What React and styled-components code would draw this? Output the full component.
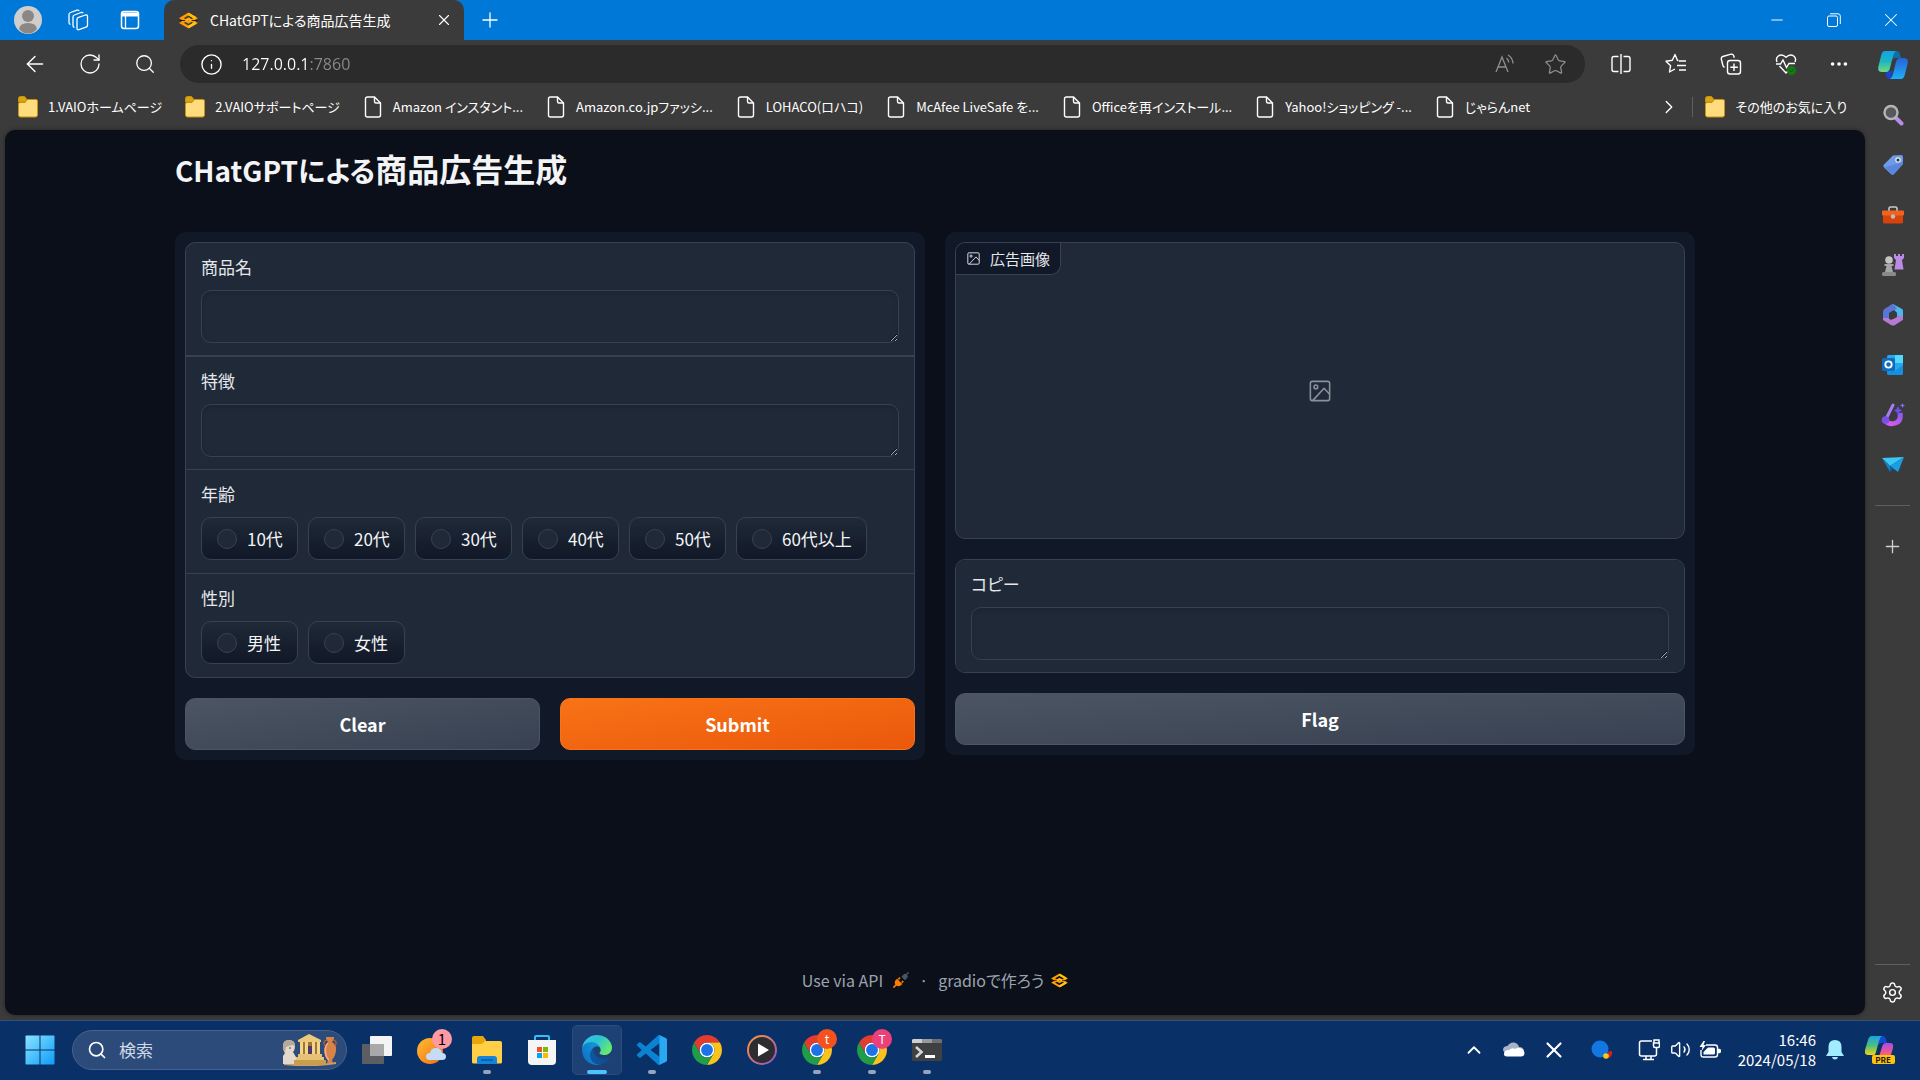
import React from "react";
import styled, { createGlobalStyle } from "styled-components";
import {
  ArrowLeft,
  RotateCw,
  Search,
  Info,
  X,
  Plus,
  Minus,
  Star,
  ChevronRight,
  ChevronUp,
  Ellipsis,
  Settings,
  Volume2,
} from "lucide-react";

const GlobalStyle = createGlobalStyle`
  * {
    box-sizing: border-box;
  }
  body {
    margin: 0;
    font-family: "Noto Sans CJK JP", sans-serif;
    font-feature-settings: "palt";
    color: #ffffff;
    background: #3b3b3b;
  }
  button,
  input,
  textarea {
    font-family: inherit;
    font-feature-settings: inherit;
    color: inherit;
    margin: 0;
  }
  svg {
    display: block;
    flex-shrink: 0;
  }
`;

/* ---------- browser frame ---------- */

const Desktop = styled.div`
  display: flex;
  flex-direction: column;
  min-height: 100vh;
  background: #3b3b3b;
`;
const TitleBar = styled.header`
  display: flex;
  align-items: center;
  height: 40px;
  background: #0078d7;
`;
const IconButton = styled.button`
  display: flex;
  align-items: center;
  justify-content: center;
  width: ${(p) => p.$w || 55}px;
  height: ${(p) => p.$h || 40}px;
  padding: 0;
  border: 0;
  flex-shrink: 0;
  background: transparent;
  color: ${(p) => p.$color || "#ffffff"};
`;
const Tab = styled.div`
  display: flex;
  align-items: center;
  gap: 12px;
  width: 300px;
  height: 40px;
  margin-left: 6px;
  padding-left: 15px;
  border-radius: 10px 10px 0 0;
  background: #3b3b3b;
  font-size: 14px;
  line-height: 20px;
  white-space: nowrap;
`;
const TabTitle = styled.span`
  flex: 1;
`;
const WindowControls = styled.div`
  display: flex;
  margin-left: auto;
`;
const Body = styled.div`
  display: flex;
  flex: 1;
`;
const Main = styled.div`
  display: flex;
  flex-direction: column;
  flex: 1;
  min-width: 0;
`;
const Toolbar = styled.div`
  display: flex;
  align-items: center;
  height: 48px;
  padding-left: 7px;
`;
const AddressBar = styled.div`
  display: flex;
  align-items: center;
  flex: 1;
  height: 38px;
  margin: 0 8px;
  padding: 0 5px 0 20px;
  border-radius: 19px;
  background: #2b2b2b;
`;
const AddressInput = styled.input`
  flex: 1;
  min-width: 0;
  height: 24px;
  margin-left: 19px;
  padding: 0;
  border: 0;
  outline: 0;
  font-family: "Open Sans", sans-serif;
  font-size: 16px;
  line-height: 24px;
  background: linear-gradient(90deg, #ffffff 66px, #8b8b8b 66px);
  -webkit-background-clip: text;
  background-clip: text;
  -webkit-text-fill-color: transparent;
`;
const Bookmarks = styled.nav`
  display: flex;
  align-items: center;
  gap: 23px;
  height: 42px;
  padding: 0 18px;
  padding-bottom: 4px;
`;
const BookmarkLink = styled.a`
  display: flex;
  align-items: center;
  gap: 10px;
  color: #ffffff;
  font-size: 13px;
  line-height: 20px;
  text-decoration: none;
  white-space: nowrap;
`;
const BookmarksEnd = styled.div`
  display: flex;
  align-items: center;
  gap: 12px;
  margin-left: auto;
`;
const VerticalRule = styled.span`
  width: 1px;
  height: 20px;
  background: #5f5f5f;
`;
const Sidebar = styled.aside`
  display: flex;
  flex-direction: column;
  align-items: center;
  width: 55px;
  padding-bottom: 3px;
`;
const SideRule = styled.span`
  width: 35px;
  height: 1px;
  margin: ${(p) => (p.$bottom ? "auto 0 2px" : "15px 0")};
  background: #5f5f5f;
`;

/* ---------- page ---------- */

const Page = styled.main`
  display: flex;
  flex-direction: column;
  flex: 1;
  margin: 0 0 5px 5px;
  padding: 18px 40px 22px;
  border-radius: 10px;
  background: #0b0f19;
  box-shadow: 0 0 4px #222222;
`;
const Container = styled.div`
  display: flex;
  flex-direction: column;
  flex: 1;
  width: 100%;
  max-width: 1520px;
  margin: 0 auto;
`;
const PageTitle = styled.h1`
  margin: 0 0 42px;
  color: #f3f4f6;
  font-size: 32px;
  font-weight: 700;
  line-height: 40px;
`;
const TitleLead = styled.span`
  font-size: 28px;
`;
const Columns = styled.div`
  display: grid;
  grid-template-columns: 1fr 1fr;
  gap: 20px;
  align-items: start;
`;
const Panel = styled.section`
  display: flex;
  flex-direction: column;
  gap: 20px;
  padding: 10px;
  border-radius: 10px;
  background: #111827;
`;
const FormGroup = styled.div`
  display: flex;
  flex-direction: column;
  gap: 1px;
  border: 1px solid #374151;
  border-radius: 10px;
  background: #374151;
  overflow: hidden;
`;
const TextField = styled.div`
  display: flex;
  flex-direction: column;
  gap: 11px;
  padding: 12px 15px;
  background: #1f2937;

  &:first-child:not(:last-child) {
    border-bottom: 1px solid #374151;
  }
`;
const FieldLabel = styled.label`
  color: #e5e7eb;
  font-size: 17px;
  line-height: 24px;
`;
const TextArea = styled.textarea`
  display: block;
  width: 100%;
  height: 53px;
  padding: 12px;
  border: 1px solid #374151;
  border-radius: 10px;
  outline: 0;
  background: #1f2937;
  box-shadow: inset 0 2px 4px rgba(0, 0, 0, 0.1);
  color-scheme: dark;
  font-size: 17px;
  line-height: 26px;
  resize: vertical;
  overflow: hidden;
`;
const RadioField = styled.fieldset`
  margin: 0;
  padding: 12px 15px 13px;
  border: 0;
  background: #1f2937;
`;
const RadioLegend = styled.legend`
  float: left;
  width: 100%;
  margin-bottom: 11px;
  padding: 0;
  color: #e5e7eb;
  font-size: 17px;
  line-height: 24px;
`;
const RadioRow = styled.div`
  display: flex;
  flex-wrap: wrap;
  gap: 10px;
  clear: both;
`;
const Chip = styled.label`
  display: flex;
  align-items: center;
  gap: 10px;
  min-width: 97px;
  height: 43px;
  padding: 0 14px 0 15px;
  border: 1px solid #374151;
  border-radius: 10px;
  background: linear-gradient(to bottom, #1f2937, #111827);
  color: #f3f4f6;
  font-size: 17px;
  line-height: 24px;
`;
const Radio = styled.input`
  appearance: none;
  width: 20px;
  height: 20px;
  border: 1px solid #374151;
  border-radius: 50%;
  background: #1f2937;

  &:checked {
    border: 6px solid #ea580c;
  }
`;
const ButtonRow = styled.div`
  display: flex;
  gap: 20px;
`;
const ActionButton = styled.button`
  flex: 1;
  height: 52px;
  border: 1px solid ${(p) => (p.$primary ? "#f97316" : "#4b5563")};
  border-radius: 10px;
  background: ${(p) =>
    p.$primary
      ? "linear-gradient(to bottom right, #f97316, #ea580c)"
      : "linear-gradient(to bottom right, #4b5563, #374151)"};
  color: #ffffff;
  font-size: 18px;
  font-weight: 700;
  line-height: 26px;
`;
const ImageBlock = styled.div`
  position: relative;
  display: flex;
  align-items: center;
  justify-content: center;
  height: 297px;
  border: 1px solid #374151;
  border-radius: 10px;
  background: #1f2937;
  overflow: hidden;
  color: #8a919b;
`;
const ImageLabel = styled.div`
  position: absolute;
  top: 0;
  left: 0;
  display: flex;
  align-items: center;
  gap: 10px;
  height: 32px;
  padding: 0 10px 0 11px;
  border: solid #374151;
  border-width: 0 1px 1px 0;
  border-radius: 0 0 10px 0;
  background: #111827;
  color: #e5e7eb;
  font-size: 15px;
  line-height: 20px;
`;
const Footer = styled.footer`
  display: flex;
  align-items: center;
  justify-content: center;
  gap: 10px;
  margin-top: auto;
  color: #9ca3af;
  font-size: 16px;
  line-height: 26px;
`;
const FooterLink = styled.a`
  display: flex;
  align-items: center;
  gap: ${(p) => p.$gap}px;
  color: inherit;
  text-decoration: none;
`;

/* ---------- taskbar ---------- */

const Taskbar = styled.div`
  display: flex;
  align-items: center;
  height: 60px;
  padding: 0 13px 2px 15px;
  border-top: 1px solid #33507a;
  background: #0a3068;
`;
const SearchPill = styled.label`
  display: flex;
  align-items: center;
  gap: 12px;
  width: 275px;
  height: 40px;
  margin: 0 5px 0 7px;
  padding: 0 8px 0 14px;
  border: 1px solid #48618b;
  border-radius: 20px;
  background: #2c4b7b;
`;
const SearchInput = styled.input`
  flex: 1;
  min-width: 0;
  padding: 0;
  border: 0;
  outline: 0;
  background: transparent;
  font-size: 17px;
  line-height: 24px;

  &::placeholder {
    color: #d0d8e4;
    opacity: 1;
  }
`;
const TaskButton = styled.button`
  position: relative;
  display: flex;
  align-items: center;
  justify-content: center;
  width: 50px;
  height: 50px;
  margin: 0 ${(p) => (p.$start ? 0 : 5)}px 0 0;
  padding: 0;
  border: 1px solid ${(p) => (p.$active ? "#2c4c7c" : "transparent")};
  border-radius: 5px;
  background: ${(p) => (p.$active ? "#1d4075" : "transparent")};

  &::after {
    content: "";
    position: absolute;
    bottom: 0;
    width: ${(p) => (p.$active ? 20 : 8)}px;
    height: 4px;
    border-radius: 2px;
    background: ${(p) =>
      p.$active ? "#4cc2ff" : p.$open ? "#95a5bf" : "transparent"};
  }
`;
const Badge = styled.span`
  position: absolute;
  top: 3px;
  right: 4px;
  width: 20px;
  height: 20px;
  border-radius: 50%;
  background: ${(p) => p.$bg};
  color: ${(p) => p.$fg || "#ffffff"};
  font-size: ${(p) => (p.$fg ? 15 : 12)}px;
  line-height: 20px;
  text-align: center;
`;
const Tray = styled.div`
  display: flex;
  align-items: center;
  margin-left: auto;
`;
const Clock = styled.time`
  width: 89px;
  padding-right: 2px;
  font-size: 15px;
  line-height: 20px;
  text-align: right;
`;

/* ---------- icons ---------- */

const GradioIcon = ({ size = 16 }) => (
  <svg width={size} height={size} viewBox="0 0 32 32" fill="none">
    <path d="M4 12 16 5l12 7-12 7z" stroke="#ff9d00" strokeWidth="4" />
    <path d="M4 20l12 7 12-7-12-7z" stroke="#ff9d00" strokeWidth="4" />
    <path d="M16 5l12 7" stroke="#ffc400" strokeWidth="4" />
    <path d="M28 20l-12 7" stroke="#ffc81e" strokeWidth="4" />
    <path d="M1 16h10M21 16h10" stroke="#1c1a18" strokeWidth="1.500" />
    <path d="M11 17l5-3 5 2" stroke="#ffb81e" strokeWidth="3" />
  </svg>
);

const FolderIcon = () => (
  <svg width="20" height="22" viewBox="0 0 20 22">
    <path d="M.5 2.500q0-2 2-2h4l2 2.500v3h-8z" fill="#d9a514" stroke="#c8930c" />
    <path
      d="M.5 8q0-1.500 1.500-1.500h5l2.500-3H18q1.500 0 1.500 1.500v14q0 2-2 2h-15q-2 0-2-2z"
      fill="#ffdc7d"
      stroke="#c8930c"
    />
  </svg>
);

const FileIcon = () => (
  <svg width="20" height="22" viewBox="0 0 20 22" fill="none" stroke="#fff">
    <path
      d="M4.500 1h7l6 6v12q0 2-2 2h-11q-2 0-2-2V3q0-2 2-2z"
      strokeWidth="1.400"
    />
    <path d="M11.500 1v4.500q0 1.500 1.500 1.500h4.500" strokeWidth="1.400" />
  </svg>
);

const AvatarIcon = () => (
  <svg width="28" height="28" viewBox="0 0 28 28">
    <circle cx="14" cy="14" r="14" fill="#d0cecc" />
    <circle cx="14" cy="10" r="6" fill="#8a8785" />
    <path d="M5 23q1-6 9-6t9 6q-4 4.500-9 4.500T5 23z" fill="#8a8785" />
  </svg>
);

const WorkspacesIcon = () => (
  <svg width="22" height="22" viewBox="0 0 22 22" fill="none" stroke="#fff" strokeWidth="1.300">
    <path d="M11.500 8.300 18.500 6q2-.5 2 1.500v8.700q0 1.500-1.500 2L12 20.700q-2 .5-2-1.500v-9q0-1.500 1.500-1.900z" />
    <path d="M7.500 18.500Q6 18 6 16.500V8q0-1.500 1.500-2L14 3.500q1.500-.4 2.200.6" />
    <path d="M3.500 15.500Q2 15 2 13.500v-8Q2 4 3.500 3.500L10 1.200q1.500-.4 2.200.6" />
  </svg>
);

const TabActionsIcon = () => (
  <svg width="20" height="20" viewBox="0 0 20 20" fill="none">
    <rect x="1.500" y="1.500" width="17" height="17" rx="2.500" stroke="#fff" strokeWidth="1.500" />
    <path d="M1.500 2.500h17v4h-17z" fill="#fff" />
    <path d="M5.500 6v12" stroke="#fff" strokeWidth="1.300" />
  </svg>
);

const RestoreIcon = () => (
  <svg width="14" height="14" viewBox="0 0 14 14" fill="none" stroke="#fff">
    <rect x=".5" y="3" width="10" height="10.500" rx="1.500" />
    <path d="M3 .8h8q2.300 0 2.300 2.300V11" />
  </svg>
);

const ReadAloudIcon = () => (
  <svg width="20" height="20" viewBox="0 0 20 20" fill="none" stroke="#8f8f8f" strokeWidth="1.300">
    <path d="M1 18 7 3l6 15M3 13h8" />
    <path d="M11.500 4q2 1.700 2.200 4.500M13 1q4.800 3 5 8.500" />
  </svg>
);

const SplitIcon = () => (
  <svg width="22" height="22" viewBox="0 0 22 22" fill="none" stroke="#fff" strokeWidth="1.400">
    <path d="M8.500 3.500H4q-2 0-2 2v11q0 2 2 2h4.500M13.500 3.500H18q2 0 2 2v11q0 2-2 2h-4.500M11 1v20" />
  </svg>
);

const FavoritesIcon = () => (
  <svg width="22" height="22" viewBox="0 0 22 22" fill="none" stroke="#fff" strokeWidth="1.400">
    <path d="M13.500 7.500h-1L10 1.500 7.300 7.300 1 8.300l4.600 4.400L4.500 19l5.500-3" strokeLinejoin="round" />
    <path d="M14 8h7M12 12.500h9M14 17h7" />
  </svg>
);

const CollectionsIcon = () => (
  <svg width="22" height="22" viewBox="0 0 22 22" fill="none" stroke="#fff" strokeWidth="1.400">
    <path d="M4.500 14.500 3 13 1.300 6q-.3-2 1.500-2.500L11 1.200q2-.5 2.700 1.500l.6 2" />
    <rect x="7.500" y="7.500" width="13" height="13.500" rx="2.500" />
    <path d="M14 10.500v7.500M10.300 14.300h7.500" />
  </svg>
);

const HealthIcon = () => (
  <svg width="22" height="22" viewBox="0 0 22 22" fill="none">
    <path
      d="M2 9Q.5 5.500 3 3.200q4-3 8 1 4-4 8-1 2.500 2.300 1 5.800M4.500 13l6.500 7 2-2M1 11h4.500l2.500-4 3.500 7.500 2.500-4h6"
      stroke="#fff"
      strokeWidth="1.400"
    />
    <circle cx="16.500" cy="17.500" r="4.500" fill="#107c10" />
    <path d="m14.500 17.500 1.500 1.500 2.500-3" stroke="#3b3b3b" />
  </svg>
);

const CopilotIcon = () => (
  <svg width="30" height="28" viewBox="0 0 30 28">
    <defs>
      <linearGradient id="cpA" x1="0" y1="0" x2="0" y2="1">
        <stop offset="0" stopColor="#12a4e4" />
        <stop offset=".5" stopColor="#1fb5c0" />
        <stop offset="1" stopColor="#6fdc7c" />
      </linearGradient>
      <linearGradient id="cpB" x1="0" y1="0" x2="0" y2="1">
        <stop offset="0" stopColor="#2a62d8" />
        <stop offset="1" stopColor="#1cb0f6" />
      </linearGradient>
    </defs>
    <path d="M15 0h4q2 0 3 3l1 4h-6l-4 2z" fill="#0f6ea8" />
    <path d="M7 20h8l-2 8h-2q-2 0-3-4z" fill="#1b44c8" />
    <path d="M7 0h11q-2 1-3 5l-3 12q-1 4-4 4H4q-5 0-3.500-6L3 5q1-5 4-5z" fill="url(#cpA)" />
    <path d="M23 28H12q2-1 3-5l3-12q1-4 4-4h4q5 0 3.500 6L27 23q-1 5-4 5z" fill="url(#cpB)" />
  </svg>
);

const SideSearchIcon = () => (
  <svg width="22" height="22" viewBox="0 0 22 22" fill="none">
    <path d="m14 14 5.500 5.500" stroke="#b98ce8" strokeWidth="4" strokeLinecap="round" />
    <circle cx="9" cy="8.500" r="6.500" stroke="#b5b5b5" strokeWidth="2.400" fill="#55585c" />
  </svg>
);

const TagIcon = () => (
  <svg width="22" height="22" viewBox="0 0 22 22">
    <path d="M11 1.500 19 1q2 0 2 2v7l-9 10q-1.500 1.500-3 0l-7-6.500q-1.500-1.500 0-3z" fill="#6d9bea" />
    <path d="M21 8v2l-9 10q-1.500 1.500-3 0l-7-6.500" fill="#5a86dc" />
    <circle cx="16" cy="6" r="2.800" fill="#e8e8e8" />
    <circle cx="16" cy="6" r="1.500" fill="#333" />
  </svg>
);

const ToolboxIcon = () => (
  <svg width="22" height="18" viewBox="0 0 22 18">
    <path d="M7 5V2.500Q7 1 8.500 1h5Q15 1 15 2.500V5" fill="none" stroke="#c9c9c9" strokeWidth="1.600" />
    <rect x="1" y="8" width="20" height="9.500" rx="1.500" fill="#d6430c" />
    <rect x="0" y="4.500" width="22" height="5" rx="1" fill="#f2631f" />
    <circle cx="11" cy="10.500" r="2.200" fill="#bdbdbd" />
  </svg>
);

const ChessIcon = () => (
  <svg width="22" height="22" viewBox="0 0 22 22">
    <path d="M12 0h2v2h2V0h2v2h2V0h2v4l-2 2 1.500 9.500H12.500L14 6l-2-2z" fill="#b98ae6" />
    <circle cx="7" cy="6" r="3.800" fill="#c4c4c4" />
    <path d="M2.500 10h9v2h-2l1.500 6H3l1.500-6h-2z" fill="#a5a5a5" />
    <rect x="0" y="18" width="14" height="4" rx="1.500" fill="#8a8a8a" />
  </svg>
);

const OfficeIcon = () => (
  <svg width="22" height="22" viewBox="0 0 22 22">
    <path d="M8 1.500 11 0l9 5q1 .7 1 2v9l-6-3V9z" fill="#49b8ee" />
    <path d="M11 0 3 4.500Q1 5.500 1 8v7l6 3V9l8-4.500z" fill="#5b74d8" />
    <path d="M1 14v2l8 5q2 1 4 0l7-4.500q1-1 1-3.500l-4-2-8 5-3-2z" fill="#b67ad4" />
    <path d="m11 7 4 2v4l-4 2.200L7 13V9.200z" fill="#3b3b3b" />
  </svg>
);

const OutlookIcon = () => (
  <svg width="22" height="20" viewBox="0 0 22 20">
    <rect x="5" y="0" width="16" height="17" rx="1.500" fill="#28a8ea" />
    <path d="M13 0h8v8h-8z" fill="#50d9ff" />
    <path d="m5 12 8 4 8-6v8.500q0 1.500-1.500 1.500H6.500Q5 20 5 18.500z" fill="#1490df" />
    <rect x="0" y="3" width="13" height="13" rx="1.500" fill="#0f6cbd" />
    <circle cx="6.500" cy="9.500" r="3.200" fill="none" stroke="#fff" strokeWidth="1.800" />
  </svg>
);

const DesignerIcon = () => (
  <svg width="24" height="24" viewBox="0 0 24 24" fill="none">
    <defs>
      <linearGradient id="dsg" x1="1" y1="0" x2="0" y2="1">
        <stop offset="0" stopColor="#8a5cf0" />
        <stop offset="1" stopColor="#e05af0" />
      </linearGradient>
    </defs>
    <path d="M19 10q1.500 8-4.500 10T4.500 18" stroke="url(#dsg)" strokeWidth="5" />
    <path d="M12 2 5 16" stroke="#a77cf5" strokeWidth="3" strokeLinecap="round" />
    <circle cx="4.500" cy="17" r="3.800" fill="#7a4fe6" />
    <path d="m17 3 1.500 3L21 7.500 18.500 9 17 12l-1.500-3L13 7.500 15.500 6z" fill="#6b4cf0" />
    <path d="m21.500 0 .8 1.700L24 2.500l-1.700.8-.8 1.700-.8-1.700L19 2.500l1.700-.8z" fill="#8b6cf8" />
  </svg>
);

const DropIcon = () => (
  <svg width="22" height="16" viewBox="0 0 22 16">
    <path d="M0 1 22 0 8 9z" fill="#3cc8f4" />
    <path d="m0 1 8 8v6l-4-7z" fill="#1580c8" />
    <path d="M22 0 8 9l8 6z" fill="#1b9de2" />
    <path d="m8 9 3.500 2.500L8 15z" fill="#0f5f9f" />
  </svg>
);

const ImageIcon = ({ size }) => (
  <svg
    width={size}
    height={size}
    viewBox="0 0 24 24"
    fill="none"
    stroke="currentColor"
    strokeWidth="1.700"
    strokeLinejoin="round"
  >
    <rect x="1.500" y="1.500" width="21" height="21" rx="2" />
    <circle cx="7.500" cy="7.500" r="2" />
    <path d="m22.500 15.500-6-6.500L4 22.500" />
  </svg>
);

const PlugIcon = () => (
  <svg width="16" height="16" viewBox="0 0 24 24">
    <path d="m12.500 7 3-3q3-3 5.500 0t0 5.500l-3 3z" fill="#4a5464" />
    <path d="m20 4 3.500-3.500" stroke="#4a5464" strokeWidth="2" />
    <path d="m6 10 8 8-2 2q-4 3-7.500 0-3.500-4-.5-8z" fill="#ff7c00" />
    <path d="m8 11 2.500-2.500M13 16l2.500-2.500M5 19l-4.500 4.500" stroke="#ff7c00" strokeWidth="2.400" />
  </svg>
);

const WindowsIcon = () => (
  <svg width="30" height="30" viewBox="0 0 30 30">
    <defs>
      <linearGradient id="win" x1="0" y1="0" x2="1" y2="1">
        <stop offset="0" stopColor="#8ae4ff" />
        <stop offset="1" stopColor="#0d9cf8" />
      </linearGradient>
    </defs>
    <path
      d="M1 .5h13.500v14H.5V1zM15.500 .5H29l.5.5v13.500h-14zM.5 15.500h14v14H1l-.5-.5zM15.500 15.500h14V29l-.5.5H15.500z"
      fill="url(#win)"
    />
  </svg>
);

const SearchArt = () => (
  <svg width="56" height="32" viewBox="0 0 56 32">
    <path d="M2 29q26 4 52-1v2q-26 4-52 1z" fill="#c9a06a" />
    <path d="M1 12q0-6 6-6t6 6q0 4-2 6l3 5v7H1v-8l2-3q-2-2-2-7z" fill="#e2d8cb" />
    <path d="M1 12q0-6 6-6t6 6l-3-1-6 2-1 5q-2-2-2-6z" fill="#b7a998" />
    <circle cx="8" cy="14" r="1" fill="#85776a" />
    <path d="m16 6 11-6 12 6v2H16z" fill="#edc97c" />
    <path d="M18 8h20v12H18z" fill="#a3752f" />
    <path d="M18 8h3v12h-3zM23 8h3v12h-3zM30 8h3v12h-3zM35 8h3v12h-3z" fill="#f1d48d" />
    <path d="M26 12h4v8h-4z" fill="#4b3a66" />
    <path d="M16 20h24v3H16zM14 23h28v3H14z" fill="#e7c274" />
    <path d="M12 26h32v5H12z" fill="#c99d4e" />
    <path d="M44 3h8v2l-2 3q5 3 4 9-1 6-4 9l1 3h-6l1-3q-4-4-4-9t4-9l-2-3z" fill="#d9824a" />
    <path d="M46 9q-4 4-2 12 1 4 3 5" fill="none" stroke="#f0b083" strokeWidth="1.500" />
    <path d="M43 12q-3-5 2-6M53 12q3-5-2-6" fill="none" stroke="#b5602d" strokeWidth="1.300" />
  </svg>
);

const TaskViewIcon = () => (
  <svg width="30" height="28" viewBox="0 0 30 28">
    <rect x="8" y="0" width="22" height="20" rx="1" fill="#f4f4f4" />
    <rect x="0" y="8" width="22" height="20" rx="1" fill="#5c5e63" />
    <path d="M8 8h14v12H8z" fill="#a9a9ab" />
  </svg>
);

const WeatherIcon = () => (
  <svg width="32" height="30" viewBox="0 0 32 30">
    <defs>
      <linearGradient id="sun" x1="0" y1="0" x2="1" y2="1">
        <stop offset="0" stopColor="#ffbe2e" />
        <stop offset="1" stopColor="#f26b1d" />
      </linearGradient>
    </defs>
    <circle cx="14" cy="16" r="13" fill="url(#sun)" />
    <path d="M14 25q-4 0-4-3.500t4-3.500q1-5 6-5t6 5q4 0 4 3.500T26 25z" fill="#c5dcf7" />
  </svg>
);

const ExplorerIcon = () => (
  <svg width="30" height="28" viewBox="0 0 30 28">
    <path d="M0 2q0-2 2-2h9l3 4v5H0z" fill="#e8a60c" />
    <path d="M0 8h10l3-3h15q2 0 2 2v19q0 1.500-1.500 1.500h-27Q0 27.500 0 26z" fill="#ffcf45" />
    <path d="M5 28v-5q0-3 3-3h14q3 0 3 3v5z" fill="#1583d8" />
    <path d="M9 24h12" stroke="#0b57a4" strokeWidth="1.500" />
  </svg>
);

const StoreIcon = () => (
  <svg width="30" height="30" viewBox="0 0 30 30">
    <path d="M8 6V2q0-1 1-1h12q1 0 1 1v4" fill="none" stroke="#31c0f4" strokeWidth="2" />
    <path d="M1 5h28v21q0 4-4 4H5q-4 0-4-4z" fill="#f5f5f5" />
    <path d="M10 12h5v5h-5z" fill="#f25022" />
    <path d="M16 12h5v5h-5z" fill="#7fba00" />
    <path d="M10 18h5v5h-5z" fill="#00a4ef" />
    <path d="M16 18h5v5h-5z" fill="#ffb900" />
  </svg>
);

const EdgeIcon = () => (
  <svg width="30" height="30" viewBox="0 0 256 256">
    <defs>
      <linearGradient id="edA" x1="0" y1="0" x2="1" y2="0">
        <stop offset="0" stopColor="#0c59a4" />
        <stop offset="1" stopColor="#114a8b" />
      </linearGradient>
      <linearGradient id="edB" x1="1" y1="0" x2="0" y2="1">
        <stop offset="0" stopColor="#1b9de2" />
        <stop offset="1" stopColor="#0a6cc0" />
      </linearGradient>
      <linearGradient id="edC" x1="0" y1="0" x2="1" y2=".6">
        <stop offset="0" stopColor="#35c1f1" />
        <stop offset=".5" stopColor="#2bc3d2" />
        <stop offset="1" stopColor="#66eb6e" />
      </linearGradient>
    </defs>
    <path
      fill="url(#edA)"
      d="M231 190.500c-3.400 1.800-6.900 3.400-10.500 4.700a101.500 101.500 0 0 1-35.900 6.400c-47.300 0-88.500-32.500-88.500-74.300 0-11.400 6.400-21.900 16.400-27.300-42.800 1.800-53.800 46.400-53.800 72.500 0 73.900 68.100 81.400 82.800 81.400 7.900 0 19.800-2.300 27-4.600l1.300-.4a128.300 128.300 0 0 0 66.600-52.800 4 4 0 0 0-5.400-5.600z"
    />
    <path
      fill="url(#edB)"
      d="M105.700 241.400a79.200 79.200 0 0 1-22.700-21.300 80.700 80.700 0 0 1 29.500-120c3.200-1.500 8.500-4.100 15.600-4a32.400 32.400 0 0 1 25.700 13 31.900 31.900 0 0 1 6.300 18.700c0-.2 24.500-79.600-80-79.600-43.900 0-80 41.600-80 78.200a130.200 130.200 0 0 0 12.100 56 128 128 0 0 0 156.400 67.100 75.500 75.500 0 0 1-62.800-8z"
    />
    <path
      fill="url(#edC)"
      d="M152.300 148.900c-.9 1-3.400 2.500-3.400 5.600 0 2.600 1.700 5.200 4.800 7.300 14.300 10 41.400 8.600 41.500 8.600a59.600 59.600 0 0 0 30.300-8.300A61.400 61.400 0 0 0 256 109.200c.3-22.400-8-37.300-11.300-43.900C223.500 23.900 177.700 0 128 0A128 128 0 0 0 0 126.200c.5-36.500 36.800-66 80-66 3.500 0 23.500.3 42 10 16.300 8.600 24.900 19 30.800 29.200 6.200 10.700 7.300 24.100 7.300 29.500 0 5.400-2.700 13.300-7.800 20z"
    />
  </svg>
);

const VsCodeIcon = () => (
  <svg width="30" height="30" viewBox="0 0 100 100">
    <path
      fill="#0b83d2"
      fillRule="evenodd"
      d="M96.500 10.800 75.900.9a6.200 6.200 0 0 0-7.100 1.200L29.400 38 12.200 25a4.200 4.200 0 0 0-5.300.2L1.400 30.200a4.200 4.200 0 0 0 0 6.200L16.300 50 1.400 63.600a4.200 4.200 0 0 0 0 6.200l5.500 5a4.200 4.200 0 0 0 5.300.2l17.200-13 39.400 35.900a6.200 6.200 0 0 0 7.100 1.200l20.600-9.900a6.200 6.200 0 0 0 3.500-5.600V16.400a6.200 6.200 0 0 0-3.500-5.600zM75 72.700 45.100 50 75 27.300z"
    />
    <path fill="#2aa9f2" d="M75 1v98l21.500-9.800q3.500-2 3.500-5.600V16.400q0-3.600-3.500-5.600z" />
  </svg>
);

const ChromeIcon = () => (
  <svg width="30" height="30" viewBox="0 0 48 48">
    <circle cx="24" cy="24" r="12" fill="#fff" />
    <path
      fill="#e33b2e"
      d="M24 12H44.780a24 24 0 0 0-41.560 0L13.610 30A12 12 0 0 1 24 12z"
    />
    <path
      fill="#fcc31e"
      d="M34.390 30 24 48A24 24 0 0 0 44.780 12H24A12 12 0 0 1 34.390 30z"
    />
    <path
      fill="#1f9d49"
      d="M13.610 30 3.220 12A24 24 0 0 0 24 48L34.390 30a12 12 0 0 1-20.780 0z"
    />
    <circle cx="24" cy="24" r="9.500" fill="#1a73e8" />
  </svg>
);

const MediaIcon = () => (
  <svg width="30" height="30" viewBox="0 0 30 30">
    <defs>
      <linearGradient id="med" x1="0" y1="0" x2="1" y2="1">
        <stop offset="0" stopColor="#ff9a3c" />
        <stop offset="1" stopColor="#8b4fd0" />
      </linearGradient>
    </defs>
    <circle cx="15" cy="15" r="14" fill="#2d2d2f" stroke="url(#med)" strokeWidth="2" />
    <path d="m11 8.500 11 6.500-11 6.500z" fill="#fff" />
  </svg>
);

const TerminalIcon = () => (
  <svg width="30" height="22" viewBox="0 0 30 22">
    <rect width="30" height="22" rx="1.500" fill="#3f4043" />
    <path d="M1 0h9v4H0V1z" fill="#cfcfcf" />
    <path d="M10 0h10v4H10z" fill="#9a9a9a" />
    <path d="M20 0h9l1 1v3H20z" fill="#6f6f6f" />
    <path d="m4 8 5.500 5L4 18" fill="none" stroke="#d5d5d5" strokeWidth="2.600" />
    <path d="M13 17.500h10" stroke="#fff" strokeWidth="3" />
  </svg>
);

const CloudIcon = () => (
  <svg width="22" height="16" viewBox="0 0 22 16">
    <path d="M3 11Q0 10 0 7q1-3 4.500-3Q7 0 11 .5q4 .5 5 4.500 5 0 5 5z" fill="#a9b3c6" />
    <path d="M1 12q0-4 5-4 3-3 6.500-1Q14 5 17 6q4 1 4.500 5 0 3-3 3.500H4Q1 14.500 1 12z" fill="#fff" />
  </svg>
);

const GlobeIcon = () => (
  <svg width="22" height="20" viewBox="0 0 22 20">
    <circle cx="9" cy="9" r="8.500" fill="#1277e0" />
    <path d="M17 12q5-3 4 2-1 4-4 4z" fill="#d6201f" />
    <circle cx="15" cy="16" r="2.800" fill="#ffc61a" />
  </svg>
);

const MonitorIcon = () => (
  <svg width="22" height="22" viewBox="0 0 22 22" fill="none" stroke="#fff" strokeWidth="1.500">
    <path d="M14 2H3.500Q1.500 2 1.500 4v11q0 2 2 2h13q2 0 2-2v-3M8 17v3M13 17v3M5 20.500h11" />
    <path d="M16 1v3h5V1zM15.500 4h6v3q0 1.500-1.500 1.500h-3q-1.500 0-1.500-1.500zM18.500 8v4" />
  </svg>
);

const BatteryIcon = () => (
  <svg width="22" height="18" viewBox="0 0 22 18" fill="none" stroke="#fff" strokeWidth="1.400">
    <path d="M7 4h9q2.500 0 2.500 2.500v7q0 2.500-2.500 2.500H4.500Q2 16 2 13.500V9" />
    <path d="M9 6.500h5.500q1.500 0 1.500 1.500v4q0 1.500-1.500 1.500h-10V11z" fill="#fff" stroke="none" />
    <path d="M19 8.500h1.500q.8 0 .8 1v1q0 1-.8 1H19" fill="#fff" />
    <path d="M4.500 0 .5 6h3L2.500 10 7 4H4.500L6 0z" fill="#fff" stroke="none" />
  </svg>
);

const BellIcon = () => (
  <svg width="18" height="20" viewBox="0 0 18 20">
    <path d="M9 0q6.500 0 6.500 7v5l2.500 4H0l2.500-4V7Q2.500 0 9 0z" fill="#a3ecff" />
    <path d="M6 17h6q-.5 2.500-3 2.500T6 17z" fill="#a3ecff" />
  </svg>
);

const PreviewBadge = styled.span`
  position: absolute;
  right: 0;
  bottom: 0;
  width: 23px;
  height: 9px;
  border-radius: 2px;
  background: #ffc20e;
  color: #1a1a1a;
  font-size: 8px;
  font-weight: 700;
  line-height: 9px;
  text-align: center;
`;
const PreviewWrap = styled.span`
  position: relative;
  display: block;
  width: 30px;
  height: 28px;
`;

const CopilotPreview = () => (
  <PreviewWrap>
    <svg width="30" height="28" viewBox="0 0 30 28">
      <defs>
        <linearGradient id="preA" x1="0" y1="0" x2="0" y2="1">
          <stop offset="0" stopColor="#18a2e8" />
          <stop offset=".5" stopColor="#4cc07a" />
          <stop offset="1" stopColor="#f5d313" />
        </linearGradient>
        <linearGradient id="preB" x1="0" y1="0" x2="0" y2="1">
          <stop offset="0" stopColor="#a64de8" />
          <stop offset=".5" stopColor="#f2598a" />
          <stop offset="1" stopColor="#f7924a" />
        </linearGradient>
      </defs>
      <path d="M14 0h4q2 0 3 3l1 4h-6l-3 2z" fill="#1548d0" />
      <path d="M7 0h10q-2 1-3 5l-3 11q-1 4-4 3H3q-4 0-3-5L3 4q1-4 4-4z" fill="url(#preA)" />
      <path d="M22 26H11q2-1 3-5l3-10q1-4 4-4h4q4 0 3 5l-3 10q-1 4-3 4z" fill="url(#preB)" />
    </svg>
    <PreviewBadge>PRE</PreviewBadge>
  </PreviewWrap>
);

/* ---------- data ---------- */

const bookmarks = [
  { label: "1.VAIOホームページ", folder: true },
  { label: "2.VAIOサポートページ", folder: true },
  { label: "Amazon インスタント..." },
  { label: "Amazon.co.jpファッシ..." },
  { label: "LOHACO(ロハコ)" },
  { label: "McAfee LiveSafe を..." },
  { label: "Officeを再インストール..." },
  { label: "Yahoo!ショッピング -..." },
  { label: "じゃらんnet" },
];

const sideApps = [
  { name: "Copilot", Icon: CopilotIcon },
  { name: "Search", Icon: SideSearchIcon },
  { name: "Shopping", Icon: TagIcon },
  { name: "Tools", Icon: ToolboxIcon },
  { name: "Games", Icon: ChessIcon },
  { name: "Microsoft 365", Icon: OfficeIcon },
  { name: "Outlook", Icon: OutlookIcon },
  { name: "Designer", Icon: DesignerIcon },
  { name: "Drop", Icon: DropIcon },
];

const taskApps = [
  { name: "Task View", Icon: TaskViewIcon },
  { name: "Weather", Icon: WeatherIcon, badge: "1", bg: "#ff99a4", fg: "#000000" },
  { name: "Explorer", Icon: ExplorerIcon, open: true },
  { name: "Store", Icon: StoreIcon },
  { name: "Edge", Icon: EdgeIcon, active: true },
  { name: "VS Code", Icon: VsCodeIcon, open: true },
  { name: "Chrome", Icon: ChromeIcon },
  { name: "Media Player", Icon: MediaIcon },
  { name: "Chrome t", Icon: ChromeIcon, open: true, badge: "t", bg: "#f4511e" },
  { name: "Chrome T", Icon: ChromeIcon, open: true, badge: "T", bg: "#ec407a" },
  { name: "Terminal", Icon: TerminalIcon, open: true },
];

const ages = ["10代", "20代", "30代", "40代", "50代", "60代以上"];
const genders = ["男性", "女性"];

const TextBox = ({ id, label }) => (
  <TextField>
    <FieldLabel htmlFor={id}>{label}</FieldLabel>
    <TextArea id={id} rows={1} />
  </TextField>
);

const RadioGroup = ({ name, label, options }) => (
  <RadioField>
    <RadioLegend>{label}</RadioLegend>
    <RadioRow>
      {options.map((option) => (
        <Chip key={option}>
          <Radio type="radio" name={name} value={option} />
          <span>{option}</span>
        </Chip>
      ))}
    </RadioRow>
  </RadioField>
);

const BrowserToolbar = () => (
  <Toolbar>
    <IconButton aria-label="Back">
      <ArrowLeft size={26} strokeWidth={1.3} />
    </IconButton>
    <IconButton aria-label="Refresh">
      <RotateCw size={24} strokeWidth={1.3} />
    </IconButton>
    <IconButton aria-label="Search">
      <Search size={22} strokeWidth={1.4} />
    </IconButton>
    <AddressBar>
      <Info size={23} strokeWidth={1.4} />
      <AddressInput aria-label="Address" defaultValue="127.0.0.1:7860" />
      <IconButton $w={50} $h={36} aria-label="Read aloud">
        <ReadAloudIcon />
      </IconButton>
      <IconButton $w={50} $h={36} $color="#8f8f8f" aria-label="Favorite">
        <Star size={23} strokeWidth={1.3} />
      </IconButton>
    </AddressBar>
    <IconButton aria-label="Split screen">
      <SplitIcon />
    </IconButton>
    <IconButton aria-label="Favorites">
      <FavoritesIcon />
    </IconButton>
    <IconButton aria-label="Collections">
      <CollectionsIcon />
    </IconButton>
    <IconButton aria-label="Browser essentials">
      <HealthIcon />
    </IconButton>
    <IconButton $w={52} aria-label="More">
      <Ellipsis size={22} strokeWidth={2} />
    </IconButton>
  </Toolbar>
);

const App = () => {
  return (
    <Desktop>
      <GlobalStyle />
      <TitleBar>
        <IconButton $w={55} aria-label="Profile">
          <AvatarIcon />
        </IconButton>
        <IconButton $w={46} aria-label="Workspaces">
          <WorkspacesIcon />
        </IconButton>
        <IconButton $w={57} aria-label="Tab actions">
          <TabActionsIcon />
        </IconButton>
        <Tab>
          <GradioIcon size={19} />
          <TabTitle>CHatGPTによる商品広告生成</TabTitle>
          <IconButton $w={40} aria-label="Close tab">
            <X size={18} strokeWidth={1.5} />
          </IconButton>
        </Tab>
        <IconButton $w={52} aria-label="New tab">
          <Plus size={24} strokeWidth={1.3} />
        </IconButton>
        <WindowControls>
          <IconButton $w={57} aria-label="Minimize">
            <Minus size={18} strokeWidth={1.3} />
          </IconButton>
          <IconButton $w={57} aria-label="Restore">
            <RestoreIcon />
          </IconButton>
          <IconButton $w={58} aria-label="Close">
            <X size={22} strokeWidth={1.1} />
          </IconButton>
        </WindowControls>
      </TitleBar>

      <Body>
        <Main>
          <BrowserToolbar />
          <Bookmarks>
            {bookmarks.map((b) => (
              <BookmarkLink key={b.label} href="#">
                {b.folder ? <FolderIcon /> : <FileIcon />}
                {b.label}
              </BookmarkLink>
            ))}
            <BookmarksEnd>
              <ChevronRight size={22} strokeWidth={1.5} />
              <VerticalRule />
              <BookmarkLink href="#">
                <FolderIcon />
                その他のお気に入り
              </BookmarkLink>
            </BookmarksEnd>
          </Bookmarks>

          <Page>
            <Container>
              <PageTitle>
                <TitleLead>CHatGPTによる</TitleLead>商品広告生成
              </PageTitle>
              <Columns>
                <Panel>
                  <FormGroup>
                    <TextBox id="product" label="商品名" />
                    <TextBox id="feature" label="特徴" />
                    <RadioGroup name="age" label="年齢" options={ages} />
                    <RadioGroup name="gender" label="性別" options={genders} />
                  </FormGroup>
                  <ButtonRow>
                    <ActionButton>Clear</ActionButton>
                    <ActionButton $primary>Submit</ActionButton>
                  </ButtonRow>
                </Panel>
                <Panel>
                  <ImageBlock>
                    <ImageLabel>
                      <ImageIcon size={13} />
                      広告画像
                    </ImageLabel>
                    <ImageIcon size={22} />
                  </ImageBlock>
                  <FormGroup>
                    <TextBox id="copy" label="コピー" />
                  </FormGroup>
                  <ButtonRow>
                    <ActionButton>Flag</ActionButton>
                  </ButtonRow>
                </Panel>
              </Columns>
              <Footer>
                <FooterLink $gap={10} href="#">
                  Use via API <PlugIcon />
                </FooterLink>
                <span>·</span>
                <FooterLink $gap={7} href="#">
                  gradioで作ろう <GradioIcon size={17} />
                </FooterLink>
              </Footer>
            </Container>
          </Page>
        </Main>

        <Sidebar>
          {sideApps.map(({ name, Icon }) => (
            <IconButton key={name} $h={50} aria-label={name}>
              <Icon />
            </IconButton>
          ))}
          <SideRule />
          <IconButton $h={50} $color="#d0d0d0" aria-label="Customize">
            <Plus size={21} strokeWidth={1.5} />
          </IconButton>
          <SideRule $bottom />
          <IconButton $h={50} aria-label="Settings">
            <Settings size={23} strokeWidth={1.5} />
          </IconButton>
        </Sidebar>
      </Body>

      <Taskbar>
        <TaskButton $start aria-label="Start">
          <WindowsIcon />
        </TaskButton>
        <SearchPill>
          <Search size={20} strokeWidth={2} />
          <SearchInput aria-label="検索" placeholder="検索" />
          <SearchArt />
        </SearchPill>
        {taskApps.map(({ name, Icon, badge, bg, fg, open, active }) => (
          <TaskButton key={name} $open={open} $active={active} aria-label={name}>
            <Icon />
            {badge && (
              <Badge $bg={bg} $fg={fg}>
                {badge}
              </Badge>
            )}
          </TaskButton>
        ))}
        <Tray>
          <IconButton $w={40} aria-label="Hidden icons">
            <ChevronUp size={22} strokeWidth={2} />
          </IconButton>
          <IconButton $w={40} aria-label="OneDrive">
            <CloudIcon />
          </IconButton>
          <IconButton $w={40} aria-label="Pen">
            <X size={26} strokeWidth={2} />
          </IconButton>
          <IconButton $w={55} aria-label="Network tool">
            <GlobeIcon />
          </IconButton>
          <IconButton $w={40} aria-label="Display">
            <MonitorIcon />
          </IconButton>
          <IconButton $w={22} aria-label="Volume">
            <Volume2 size={21} strokeWidth={1.6} />
          </IconButton>
          <IconButton $w={38} aria-label="Battery">
            <BatteryIcon />
          </IconButton>
          <Clock>
            16:46
            <br />
            2024/05/18
          </Clock>
          <IconButton $w={34} aria-label="Notifications">
            <BellIcon />
          </IconButton>
          <IconButton $w={55} aria-label="Copilot preview">
            <CopilotPreview />
          </IconButton>
        </Tray>
      </Taskbar>
    </Desktop>
  );
};

export default App;
